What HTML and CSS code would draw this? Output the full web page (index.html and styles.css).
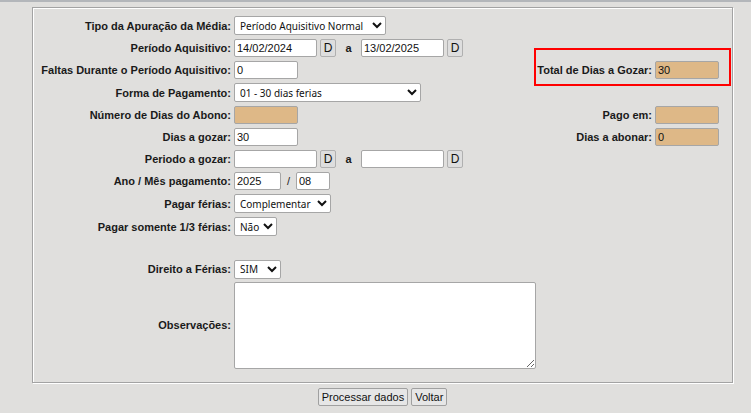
FILE: index.html
```html
<!DOCTYPE html>
<html>
<head>
    <title>Férias</title>
    <link rel="stylesheet" href="styles.css">
</head>
<body>
    <div class="topbar"></div>
    <div class="box">
        <div class="form">
            <div class="lbl">Tipo da Apuração da Média:</div>
            <div class="ctl">
                <select class="sel w-tipo">
                    <option>Período Aquisitivo Normal</option>
                </select>
            </div>
            <div></div><div></div>

            <div class="lbl">Período Aquisitivo:</div>
            <div class="ctl">
                <input class="txt w-data" value="14/02/2024">
                <button class="btn-d">D</button>
                <span class="sep">a</span>
                <input class="txt w-data" value="13/02/2025">
                <button class="btn-d">D</button>
            </div>
            <div></div><div></div>

            <div class="lbl">Faltas Durante o Período Aquisitivo:</div>
            <div class="ctl"><input class="txt w-num" value="0"></div>
            <div class="lbl destaque">Total de Dias a Gozar:<span class="marca"></span></div>
            <div class="ctl"><input class="txt w-num tan" value="30" readonly></div>

            <div class="lbl">Forma de Pagamento:</div>
            <div class="ctl">
                <select class="sel w-forma">
                    <option>01 - 30 dias ferias</option>
                </select>
            </div>
            <div></div><div></div>

            <div class="lbl">Número de Dias do Abono:</div>
            <div class="ctl"><input class="txt w-num tan" value="" readonly></div>
            <div class="lbl">Pago em:</div>
            <div class="ctl"><input class="txt w-num tan" value="" readonly></div>

            <div class="lbl">Dias a gozar:</div>
            <div class="ctl"><input class="txt w-num" value="30"></div>
            <div class="lbl">Dias a abonar:</div>
            <div class="ctl"><input class="txt w-num tan" value="0" readonly></div>

            <div class="lbl">Periodo a gozar:</div>
            <div class="ctl">
                <input class="txt w-data" value="">
                <button class="btn-d">D</button>
                <span class="sep">a</span>
                <input class="txt w-data" value="">
                <button class="btn-d">D</button>
            </div>
            <div></div><div></div>

            <div class="lbl">Ano / Mês pagamento:</div>
            <div class="ctl">
                <input class="txt w-ano" value="2025">
                <span class="barra">/</span>
                <input class="txt w-mes" value="08">
            </div>
            <div></div><div></div>

            <div class="lbl">Pagar férias:</div>
            <div class="ctl">
                <select class="sel w-pagar">
                    <option>Complementar</option>
                </select>
            </div>
            <div></div><div></div>

            <div class="lbl">Pagar somente 1/3 férias:</div>
            <div class="ctl">
                <select class="sel w-nao">
                    <option>Não</option>
                </select>
            </div>
            <div></div><div></div>

            <div></div><div></div><div></div><div></div>

            <div class="lbl">Direito a Férias:</div>
            <div class="ctl">
                <select class="sel w-sim">
                    <option>SIM</option>
                </select>
            </div>
            <div></div><div></div>

            <div class="lbl">Observações:</div>
            <div class="ctl obs-cell"><textarea class="obs"></textarea></div>
            <div></div>
        </div>
    </div>
    <div class="acoes">
        <button class="btn">Processar dados</button>
        <button class="btn">Voltar</button>
    </div>
</body>
</html>
```

FILE: styles.css
```css
* {
    margin: 0;
    padding: 0;
    box-sizing: border-box;
}
body {
    background-color: #e0dfdd;
    font-family: "Liberation Sans", Arial, sans-serif;
    font-size: 11px;
    color: #1a1a1a;
    width: 751px;
}
.topbar {
    height: 2px;
    background-color: #b3b6ba;
}
.box {
    margin: 5px 18px 0 32px;
    border: 1px solid #a3a3a3;
    box-shadow: 1px 1px 0 #fff, inset 1px 1px 0 #fff;
    padding: 6px 13px 13px 1px;
}
.form {
    display: grid;
    grid-template-columns: 197px 1fr auto 64px;
    grid-template-rows: 23px 22px 22px 23px 22px 22px 22px 22px 23px 23px 20px 22px auto;
    column-gap: 3px;
    align-items: center;
}
.lbl {
    font-weight: bold;
    text-align: right;
    white-space: nowrap;
}
.destaque {
    position: relative;
}
.marca {
    position: absolute;
    left: -3px;
    top: -16px;
    width: 197px;
    height: 38px;
    border: 2px solid #ff0000;
    pointer-events: none;
}
.ctl {
    display: flex;
    align-items: center;
}
.obs-cell {
    grid-column: span 2;
}
.txt {
    height: 18px;
    border: 1px solid #a6a6a6;
    border-radius: 2px;
    background-color: #fff;
    font-family: "Liberation Sans", Arial, sans-serif;
    font-size: 11px;
    color: #111;
    padding: 0 2px;
}
.tan {
    background-color: #deb887;
}
.w-data { width: 83px; }
.w-num { width: 64px; }
.w-ano { width: 47px; }
.w-mes { width: 34px; }
.btn-d {
    width: 16px;
    height: 18px;
    margin-left: 3px;
    border: 1px solid #b0b0b0;
    border-radius: 2px;
    background-color: #dedede;
    font-family: "Liberation Sans", Arial, sans-serif;
    font-size: 12px;
    color: #111;
}
.sep {
    font-weight: bold;
    width: 25px;
    text-align: center;
}
.barra {
    width: 15px;
    text-align: center;
}
.sel {
    height: 19px;
    border: 1px solid #a6a6a6;
    border-radius: 2px;
    background-color: #fff;
    font-family: "Noto Sans", sans-serif;
    font-size: 10px;
    color: #111;
    padding: 0 0 0 1px;
}
.w-tipo { width: 152px; }
.w-forma { width: 187px; }
.w-pagar { width: 97px; }
.w-nao { width: 43px; }
.w-sim { width: 47px; }
.obs {
    width: 302px;
    height: 87px;
    margin-top: 2px;
    border: 1px solid #a6a6a6;
    border-radius: 2px;
    background-color: #fff;
}
.acoes {
    margin-left: 32px;
    width: 701px;
    padding-top: 5px;
    display: flex;
    justify-content: center;
    gap: 3px;
}
.btn {
    height: 18px;
    padding: 0 3px;
    border: 1px solid #a0a0a0;
    border-radius: 2px;
    background-color: #e6e6e6;
    font-family: "Liberation Sans", Arial, sans-serif;
    font-size: 11px;
    color: #111;
}
```
